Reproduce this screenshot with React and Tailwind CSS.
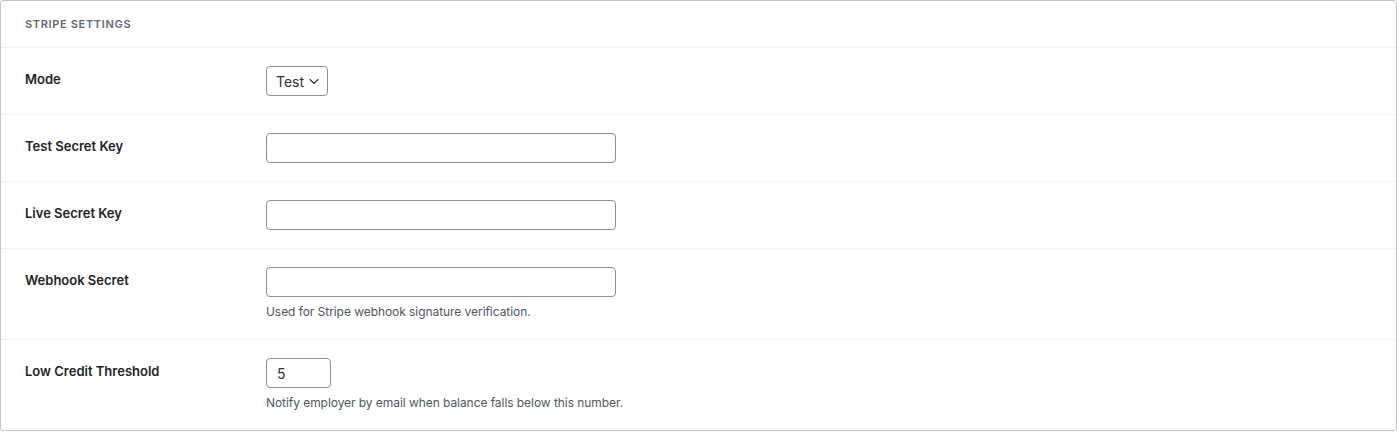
import React from 'react';

const font = { fontFamily: 'Inter, "Noto Sans", sans-serif' };

const Row = ({ label, children, hint, last }) => (
  <div className={`flex px-6 py-[18px] ${last ? '' : 'border-b border-[#f0f0f1]'}`}>
    <div className="w-[241px] shrink-0 pt-[3px] text-[13px] leading-[20px] font-semibold text-[#1d2327]">
      {label}
    </div>
    <div className="flex flex-col">
      {children}
      {hint && <p className="mt-[6px] text-[12px] leading-[18px] tracking-[-0.005em] text-[#50575e]">{hint}</p>}
    </div>
  </div>
);

const TextInput = ({ className = 'w-[350px]', value = '' }) => (
  <input
    type="text"
    defaultValue={value}
    className={`${className} h-[30px] rounded-[4px] border border-[#8c8f94] bg-white px-[10px] text-[14px] text-[#2c3338] outline-none`}
  />
);

export default function App() {
  return (
    <div className="bg-white" style={font}>
      <div className="rounded-[3px] border border-[#c3c4c7] bg-white shadow-[0_1px_1px_rgba(0,0,0,0.06)]">
        <div className="border-b border-[#f0f0f1] px-6 py-[15px]">
          <h2 className="text-[11px] leading-[16px] font-semibold uppercase tracking-[0.06em] text-[#646970]">
            Stripe Settings
          </h2>
        </div>

        <Row label="Mode">
          <div className="flex h-[30px] w-[62px] items-center justify-between rounded-[4px] border border-[#8c8f94] bg-white pl-[9px] pr-[7px] text-[14px] text-[#2c3338]">
            <span>Test</span>
            <svg width="12" height="12" viewBox="0 0 12 12" fill="none">
              <path d="M2 4.5 6 8.5 10 4.5" stroke="#2c3338" strokeWidth="1.1" strokeLinecap="round" strokeLinejoin="round" />
            </svg>
          </div>
        </Row>

        <Row label="Test Secret Key">
          <TextInput />
        </Row>

        <Row label="Live Secret Key">
          <TextInput />
        </Row>

        <Row label="Webhook Secret" hint="Used for Stripe webhook signature verification.">
          <TextInput />
        </Row>

        <Row label="Low Credit Threshold" hint="Notify employer by email when balance falls below this number." last>
          <TextInput className="w-[65px]" value="5" />
        </Row>
      </div>
    </div>
  );
}
